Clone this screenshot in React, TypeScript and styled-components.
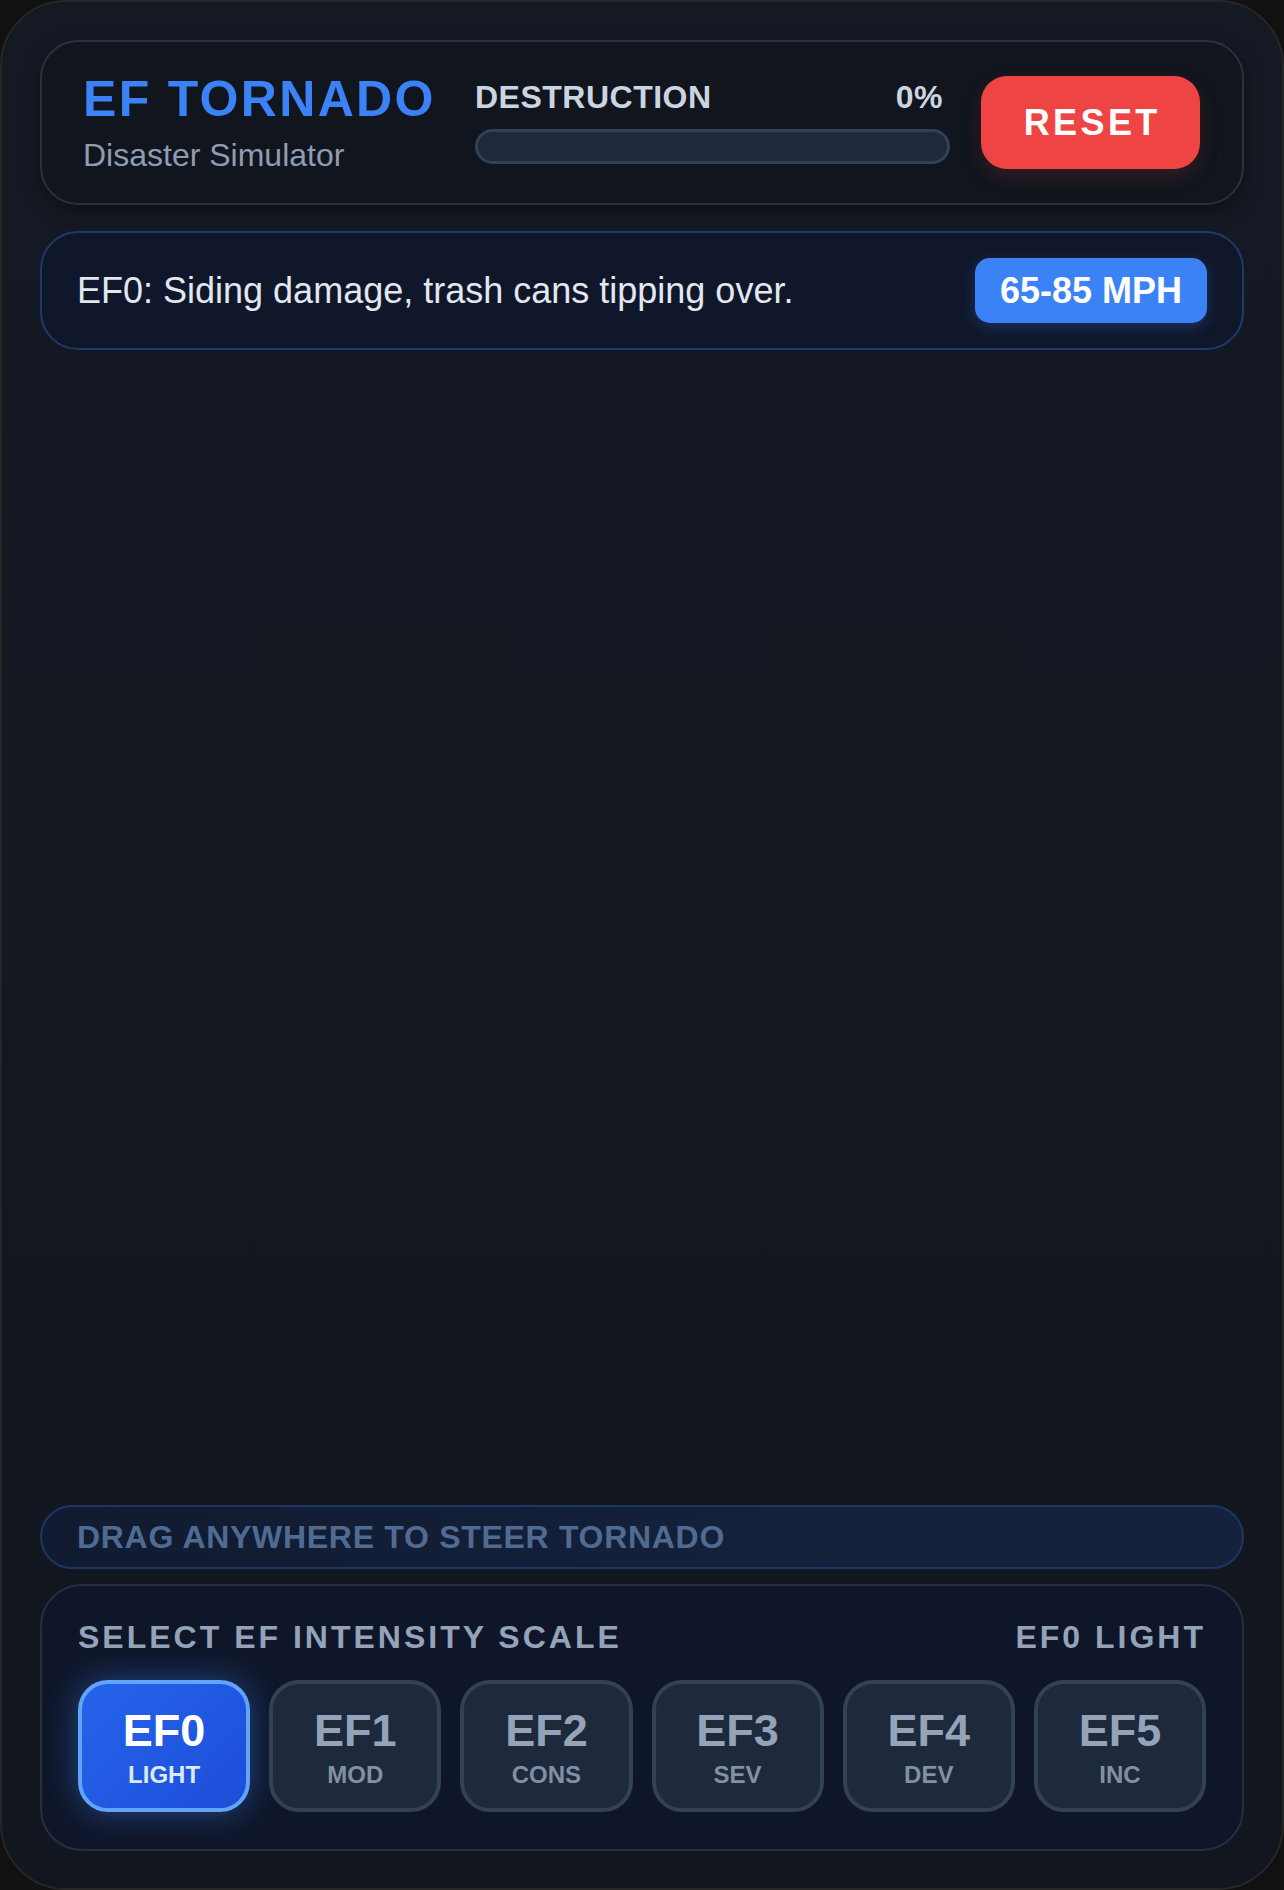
import React from "react";
import styled, { createGlobalStyle, css } from "styled-components";

const GlobalStyle = createGlobalStyle`
  html, body {
    margin: 0;
    padding: 0;
    background: #111111;
  }
  body {
    font-family: "Liberation Sans", Arial, sans-serif;
  }
  * { box-sizing: border-box; }
`;

const Device = styled.div`
  width: 1284px;
  min-height: 1890px;
  border-radius: 66px;
  border: 2px solid #262626;
  background: linear-gradient(180deg, #141923 0%, #12161e 100%);
  padding: 38px 38px 37px;
  display: flex;
  flex-direction: column;
  overflow: hidden;
`;

const HeaderCard = styled.header`
  display: flex;
  align-items: center;
  height: 165px;
  padding: 0 42px 0 41px;
  border: 2px solid #2b313c;
  border-radius: 38px;
  background: #11151d;
  box-shadow: 0 6px 18px rgba(0, 0, 0, 0.35);
`;

const TitleBlock = styled.div`
  display: flex;
  flex-direction: column;
  width: 392px;
  padding-top: 4px;
`;

const Title = styled.h1`
  margin: 0;
  font-size: 50px;
  line-height: 1;
  font-weight: 700;
  letter-spacing: 2.3px;
  color: #3b82f6;
`;

const Subtitle = styled.div`
  margin-top: 12px;
  font-size: 32px;
  line-height: 1.2;
  color: #8f9db2;
`;

const Progress = styled.div`
  flex: 1;
  margin-right: 31px;
  display: flex;
  flex-direction: column;
  gap: 16px;
`;

const ProgressLabels = styled.div`
  display: flex;
  justify-content: space-between;
  padding-right: 7px;
  font-size: 32px;
  line-height: 1;
  font-weight: 700;
  letter-spacing: 0.5px;
  color: #cbd5e1;
`;

const Track = styled.div`
  height: 35px;
  border-radius: 999px;
  border: 3px solid #334155;
  background: #1e293b;
  overflow: hidden;
`;

const Fill = styled.div`
  height: 100%;
  background: linear-gradient(90deg, #f59e0b, #ef4444);
`;

const ResetButton = styled.button`
  width: 219px;
  height: 93px;
  border: none;
  border-radius: 26px;
  background: #ef4444;
  color: #ffffff;
  font-family: inherit;
  font-size: 36px;
  font-weight: 700;
  letter-spacing: 3.4px;
  padding: 0 0 0 3.4px;
  cursor: pointer;
  box-shadow: 0 8px 20px rgba(239, 68, 68, 0.15);
`;

const InfoCard = styled.section`
  margin-top: 26px;
  display: flex;
  align-items: center;
  justify-content: space-between;
  padding: 25px 35px;
  border: 2px solid #1e3a6b;
  border-radius: 38px;
  background: #10172a;
`;

const InfoText = styled.p`
  margin: 0;
  font-size: 36px;
  line-height: 1.2;
  color: #e2e8f0;
`;

const SpeedBadge = styled.div`
  height: 65px;
  padding: 0 25px;
  display: flex;
  align-items: center;
  border-radius: 15px;
  background: #3b82f6;
  color: #ffffff;
  font-size: 36px;
  font-weight: 700;
  box-shadow: 0 4px 14px rgba(59, 130, 246, 0.25);
`;

const Canvas = styled.div`
  flex: 1;
`;

const DragHint = styled.div`
  height: 64px;
  display: flex;
  align-items: center;
  padding: 0 35px;
  border: 2px solid #1d3763;
  border-radius: 999px;
  background: linear-gradient(90deg, #111b31 0%, #14213b 60%, #14223e 100%);
  color: #4f6b92;
  font-size: 32px;
  font-weight: 700;
  letter-spacing: 0.7px;
`;

const ControlPanel = styled.section`
  margin-top: 15px;
  padding: 35px 36px 37px;
  border: 2px solid #272f3f;
  border-radius: 42px;
  background: #0f1629;
`;

const PanelHeader = styled.div`
  display: flex;
  justify-content: space-between;
  font-size: 32px;
  line-height: 1;
  font-weight: 700;
  letter-spacing: 3px;
  color: #94a3b8;
`;

const ScaleGrid = styled.div`
  margin-top: 27px;
  display: grid;
  grid-template-columns: repeat(6, 1fr);
  gap: 19px;
`;

const ScaleButton = styled.button<{ $active: boolean }>`
  height: 132px;
  border-radius: 30px;
  border: 4px solid #334155;
  background: #1e293b;
  font-family: inherit;
  display: flex;
  flex-direction: column;
  align-items: center;
  justify-content: center;
  gap: 10px;
  padding: 2px 0 0;
  cursor: pointer;
  ${(p) =>
    p.$active &&
    css`
      border-color: #60a5fa;
      background: linear-gradient(135deg, #2563eb 0%, #1d4ed8 100%);
      box-shadow: 0 0 32px rgba(59, 130, 246, 0.45);
    `}
`;

const ScaleCode = styled.span<{ $active: boolean }>`
  font-size: 45px;
  line-height: 1;
  font-weight: 700;
  color: ${(p) => (p.$active ? "#ffffff" : "#94a3b8")};
`;

const ScaleName = styled.span<{ $active: boolean }>`
  font-size: 24px;
  line-height: 1;
  font-weight: 700;
  color: ${(p) => (p.$active ? "#dbeafe" : "#8090a6")};
`;

const scales = [
  { code: "EF0", name: "LIGHT" },
  { code: "EF1", name: "MOD" },
  { code: "EF2", name: "CONS" },
  { code: "EF3", name: "SEV" },
  { code: "EF4", name: "DEV" },
  { code: "EF5", name: "INC" },
];

export default function App() {
  const selected = 0;
  const destruction = 0;
  return (
    <>
      <GlobalStyle />
      <Device>
        <HeaderCard>
          <TitleBlock>
            <Title>EF TORNADO</Title>
            <Subtitle>Disaster Simulator</Subtitle>
          </TitleBlock>
          <Progress>
            <ProgressLabels>
              <span>DESTRUCTION</span>
              <span>{destruction}%</span>
            </ProgressLabels>
            <Track>
              <Fill style={{ width: `${destruction}%` }} />
            </Track>
          </Progress>
          <ResetButton>RESET</ResetButton>
        </HeaderCard>

        <InfoCard>
          <InfoText>EF0: Siding damage, trash cans tipping over.</InfoText>
          <SpeedBadge>65-85 MPH</SpeedBadge>
        </InfoCard>

        <Canvas />

        <DragHint>DRAG ANYWHERE TO STEER TORNADO</DragHint>

        <ControlPanel>
          <PanelHeader>
            <span>SELECT EF INTENSITY SCALE</span>
            <span>EF0 LIGHT</span>
          </PanelHeader>
          <ScaleGrid>
            {scales.map((s, i) => (
              <ScaleButton key={s.code} $active={i === selected}>
                <ScaleCode $active={i === selected}>{s.code}</ScaleCode>
                <ScaleName $active={i === selected}>{s.name}</ScaleName>
              </ScaleButton>
            ))}
          </ScaleGrid>
        </ControlPanel>
      </Device>
    </>
  );
}
